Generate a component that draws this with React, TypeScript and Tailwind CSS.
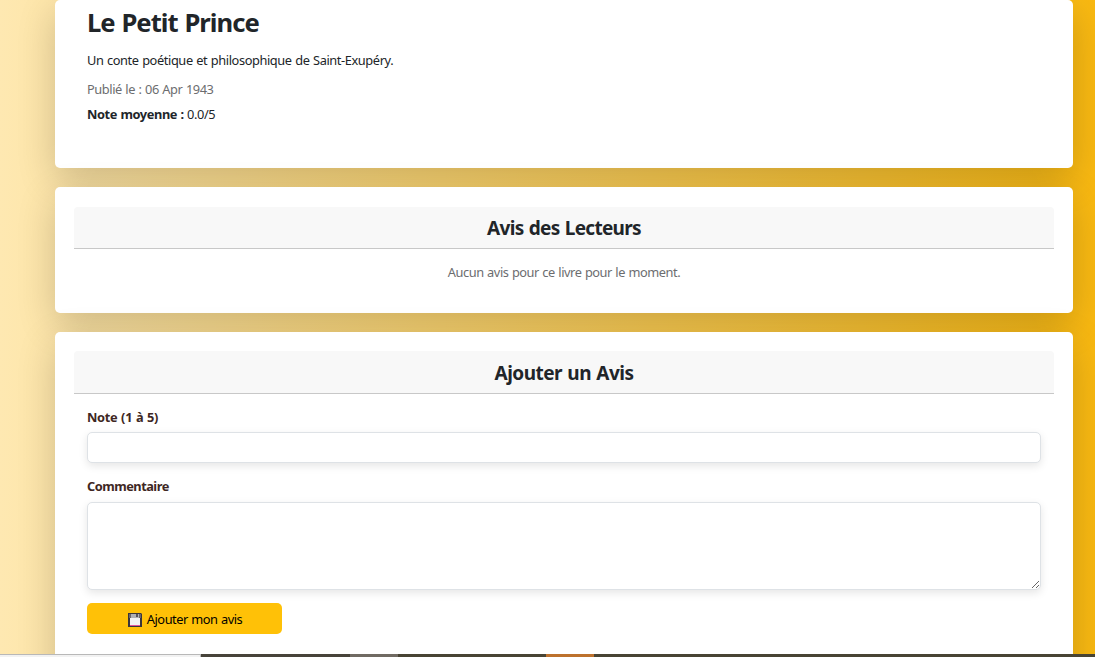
import type { ReactNode } from "react";

function Card({ className, children }: { className: string; children: ReactNode }) {
  return (
    <section
      className={`w-[1018px] shrink-0 rounded-[5px] bg-white px-[19px] shadow-[0_12px_38px_rgba(0,0,0,0.19)] ${className}`}
    >
      {children}
    </section>
  );
}

function CardHeader({ children, className }: { children: ReactNode; className: string }) {
  return (
    <h2
      className={`flex items-center justify-center rounded-t-[4px] border-b border-[#c8c8c8] bg-[#f8f8f8] text-[19px] font-bold ${className}`}
    >
      {children}
    </h2>
  );
}

function FloppyIcon() {
  return (
    <svg width="14" height="14" viewBox="0 0 14 14" className="mr-[5px] shrink-0" aria-hidden="true">
      <path d="M0 0h13l1 1v13H0z" fill="#39353c" />
      <path d="M1 1h2v4H1zM11 1h2v4h-2z" fill="#69656c" />
      <path d="M3 1h8v4H3z" fill="#b0b0b4" />
      <path d="M8 1h2v3H8z" fill="#56525a" />
      <path d="M2 5h10v8H2z" fill="#f2f2f4" />
      <path d="M2 12h10v1H2z" fill="#e0559c" />
    </svg>
  );
}

export default function App() {
  return (
    <div className="flex h-[657px] w-[1095px] flex-col overflow-hidden bg-[linear-gradient(90deg,#fee8b1,#f9b911)] font-['Noto_Sans','Open_Sans',sans-serif] text-[12.8px] text-[#212529]">
      <main className="flex h-[654px] shrink-0 flex-col gap-[19px] overflow-hidden pl-[55px]">
        <Card className="h-[168px]">
          <div className="px-[13px] pt-[7px]">
            <h1 className="text-[25.6px] leading-[32px] font-bold tracking-[-0.95px] [word-spacing:1px]">
              Le Petit Prince
            </h1>
            <p className="mt-[12px] leading-[19px] tracking-[-0.4px] [word-spacing:0.6px]">
              Un conte poétique et philosophique de Saint-Exupéry.
            </p>
            <p className="mt-[10px] leading-[19px] tracking-[-0.42px] text-[#6c6d6f] [word-spacing:0.6px]">
              Publié le : 06 Apr 1943
            </p>
            <p className="mt-[6px] leading-[19px] tracking-[-0.4px] [word-spacing:0.5px]">
              <strong>Note moyenne :</strong> 0.0/5
            </p>
          </div>
        </Card>

        <Card className="h-[126px] pt-[20px]">
          <CardHeader className="h-[42px] pt-[2px] tracking-[-0.7px] [word-spacing:1px]">Avis des Lecteurs</CardHeader>
          <p className="mt-[14px] text-center leading-[19px] tracking-[-0.45px] text-[#6c6d6f] [word-spacing:0.6px]">
            Aucun avis pour ce livre pour le moment.
          </p>
        </Card>

        <Card className="h-[360px] pt-[19px]">
          <CardHeader className="h-[43px] pt-[3px] tracking-[-0.5px] [word-spacing:0.8px]">Ajouter un Avis</CardHeader>
          <form className="flex flex-col items-start px-[13px] pt-[14px]">
            <label
              htmlFor="note"
              className="leading-[19px] font-bold tracking-[-0.3px] text-[#3e2723] [word-spacing:0.7px]"
            >
              Note (1 à 5)
            </label>
            <input
              id="note"
              className="mt-[5px] h-[31px] w-[954px] rounded-[5px] border border-[#dee2e6] bg-white shadow-[0_3px_8px_rgba(0,0,0,0.1)] outline-none"
            />
            <label htmlFor="comment" className="mt-[14px] leading-[19px] font-bold tracking-[-0.5px] text-[#3e2723]">
              Commentaire
            </label>
            <textarea
              id="comment"
              className="mt-[6px] h-[88px] w-[954px] resize rounded-[5px] border border-[#dee2e6] bg-white shadow-[0_3px_8px_rgba(0,0,0,0.1)] outline-none"
            />
            <button
              type="button"
              className="mt-[13px] flex h-[31px] w-[195px] items-center justify-center rounded-[5px] bg-[#ffc107] pt-[2px] pl-px tracking-[-0.45px] text-black [word-spacing:0.5px]"
            >
              <FloppyIcon />
              Ajouter mon avis
            </button>
          </form>
        </Card>
      </main>

      <footer className="flex h-[3px] shrink-0">
        <div className="w-[201px] border-t border-r border-[#b8b8b8] bg-[#f2f2f2]" />
        <div className="w-[149px] bg-[#47433a]" />
        <div className="w-[48px] bg-[#706a62]" />
        <div className="w-[148px] bg-[#484434]" />
        <div className="w-[48px] bg-[#bd712d]" />
        <div className="flex-1 bg-[#484434]" />
      </footer>
    </div>
  );
}
